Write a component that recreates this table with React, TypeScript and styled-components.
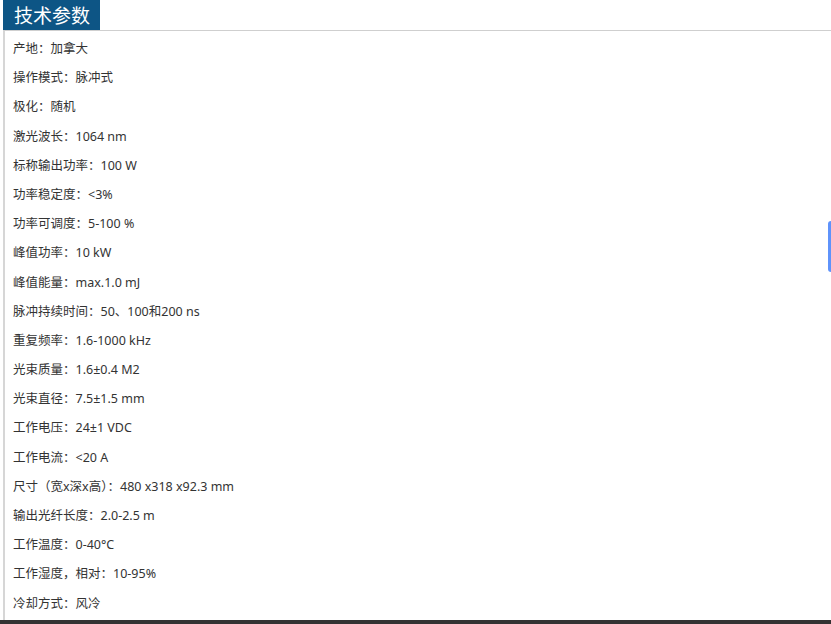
import React from "react";
import styled, { createGlobalStyle } from "styled-components";

const Global = createGlobalStyle`
  html, body { margin: 0; padding: 0; background: #fff; overflow: hidden; }
  body { font-family: "Noto Sans", "Noto Sans CJK SC", sans-serif; }
`;

const Page = styled.div`
  position: relative;
  width: 831px;
  height: 624px;
  overflow: hidden;
  display: flex;
  flex-direction: column;
`;

const TitleBar = styled.div`
  display: flex;
  padding-left: 3px;
`;

const Title = styled.h2`
  margin: 0;
  height: 30px;
  padding: 0 10px 0 11px;
  background: #0d5585;
  color: #fff;
  font-size: 19px;
  font-weight: 400;
  line-height: 30px;
  font-family: "Noto Sans CJK SC", sans-serif;
`;

const Content = styled.div`
  margin-left: 3px;
  border-top: 1px solid #cfcfcf;
  border-left: 2px solid #d6d6d6;
  padding: 3px 0 2px 8px;
  height: 584px;
`;

const Row = styled.p`
  margin: 0;
  height: 29.2px;
  line-height: 29.2px;
  font-size: 12.5px;
  color: #333;
  font-family: "Noto Sans", "Noto Sans CJK SC", sans-serif;
`;

const Footer = styled.div`
  height: 4px;
  background: #333;
`;

const Handle = styled.div`
  position: absolute;
  right: 0;
  top: 221px;
  width: 3px;
  height: 51px;
  background: #5f93fb;
  border-radius: 3px 0 0 3px;
`;

const rows = [
  "产地：加拿大",
  "操作模式：脉冲式",
  "极化：随机",
  "激光波长：1064 nm",
  "标称输出功率：100 W",
  "功率稳定度：<3%",
  "功率可调度：5-100 %",
  "峰值功率：10 kW",
  "峰值能量：max.1.0 mJ",
  "脉冲持续时间：50、100和200 ns",
  "重复频率：1.6-1000 kHz",
  "光束质量：1.6±0.4 M2",
  "光束直径：7.5±1.5 mm",
  "工作电压：24±1 VDC",
  "工作电流：<20 A",
  "尺寸（宽x深x高）：480 x318 x92.3 mm",
  "输出光纤长度：2.0-2.5 m",
  "工作温度：0-40°C",
  "工作湿度，相对：10-95%",
  "冷却方式：风冷",
];

export default function App() {
  return (
    <Page>
      <Global />
      <TitleBar>
        <Title>技术参数</Title>
      </TitleBar>
      <Content>
        {rows.map((r) => (
          <Row key={r}>{r}</Row>
        ))}
      </Content>
      <Footer />
      <Handle />
    </Page>
  );
}
